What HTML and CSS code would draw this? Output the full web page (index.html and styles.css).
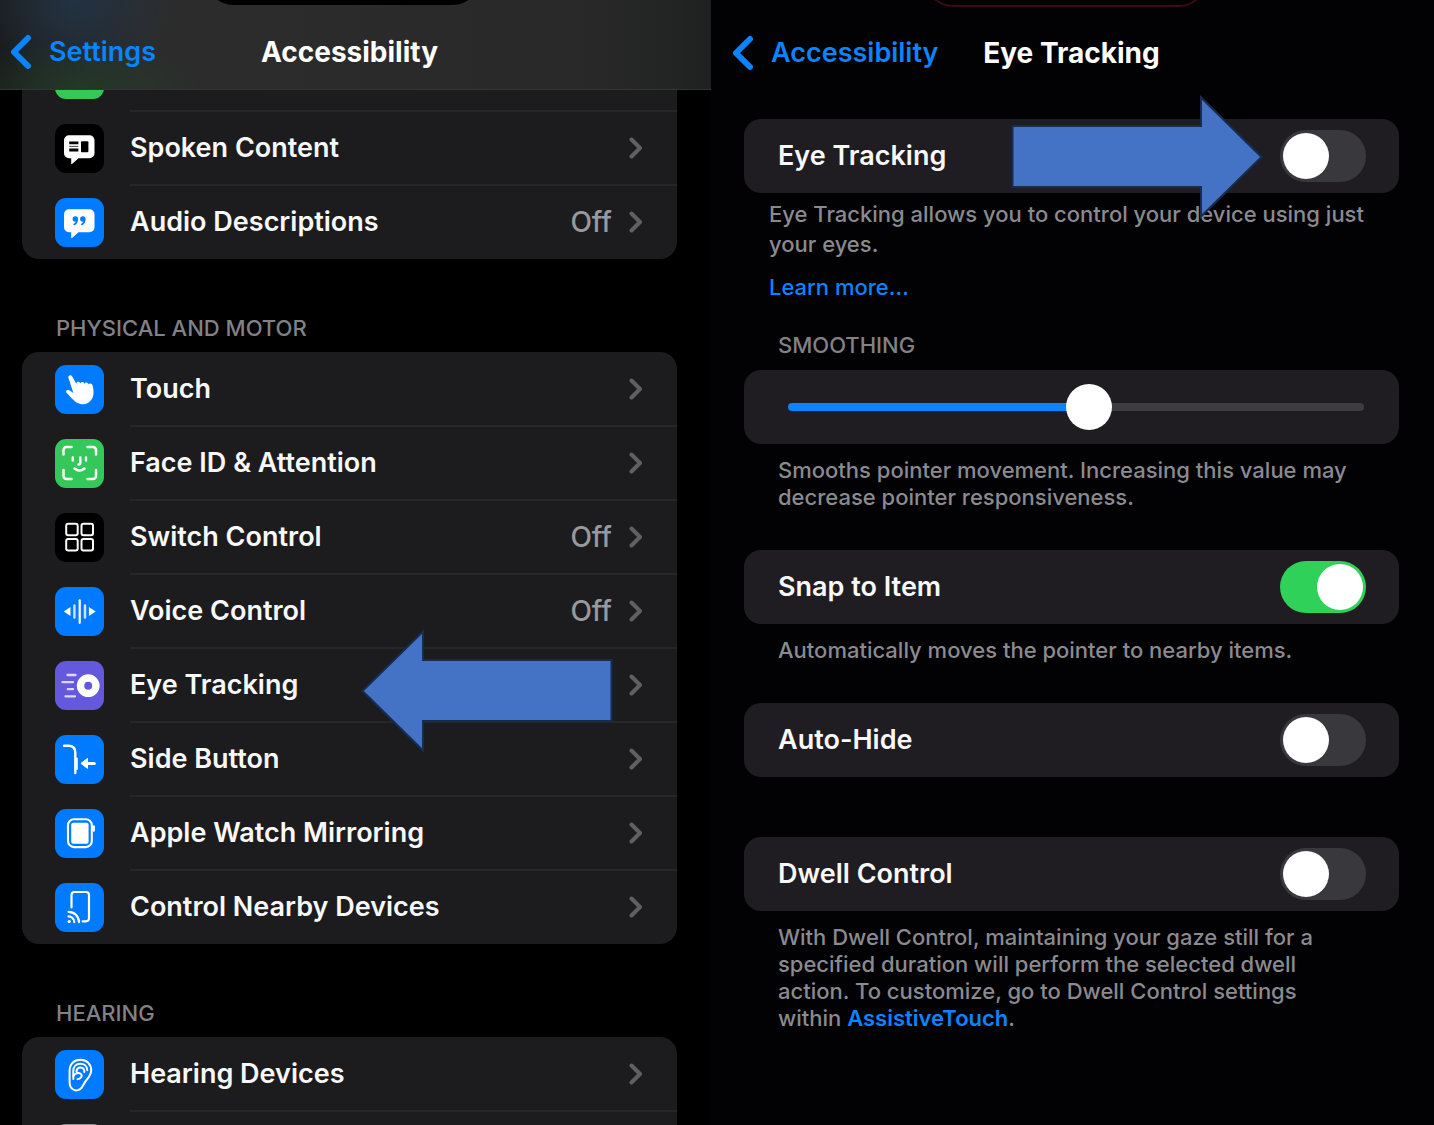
FILE: index.html
```html
<!DOCTYPE html>
<html lang="en">
<head>
  <meta charset="UTF-8" />
  <meta name="viewport" content="width=device-width, initial-scale=1.0"/>
  <title>Eye Tracking Settings</title>
  <link rel="stylesheet" href="styles.css">
</head>
<body>

  <svg class="hidden">
    <symbol id="chevron" viewBox="0 0 14 22">
      <path d="M2.500 2.500 L11 11 L2.500 19.500" fill="none" stroke="currentColor" stroke-width="4" stroke-linecap="round" stroke-linejoin="round"/>
    </symbol>
    <symbol id="back" viewBox="0 0 22 36">
      <path d="M18 4 L4 18 L18 32" fill="none" stroke="currentColor" stroke-width="6" stroke-linecap="round" stroke-linejoin="round"/>
    </symbol>
  </svg>

  <!-- Accessibility list -->
  <section class="screen screen-list">
    <div class="island"></div>
    <header class="navbar navbar-blur">
      <a class="back" href="#"><svg class="back-icon"><use href="#back"/></svg>Settings</a>
      <h1>Accessibility</h1>
    </header>

    <div class="card card-scrolled">
      <div class="row"><span class="icon green"></span></div>
      <a class="row" href="#">
        <svg class="icon black" viewBox="0 0 49 49">
          <path fill="#fff" d="M14 11.300h20.500a5 5 0 0 1 5 5v13a5 5 0 0 1-5 5H23.500L17 40q-.8.500-.8-.6v-5.100H14a5 5 0 0 1-5-5v-13a5 5 0 0 1 5-5z"/>
          <path stroke="#000" stroke-width="2.800" d="M14.200 18.800h9.200M14.200 26h9.200"/>
          <rect x="26" y="17.300" width="7.400" height="11" rx="1" fill="#000"/>
          <path stroke="#444" stroke-width="1" d="M14.200 22.400h9"/>
        </svg>
        <span class="label">Spoken Content</span>
        <svg class="chevron"><use href="#chevron"/></svg>
      </a>
      <a class="row" href="#">
        <svg class="icon blue" viewBox="0 0 49 49">
          <path fill="#fff" d="M14 11.300h20.500a5 5 0 0 1 5 5v13a5 5 0 0 1-5 5H23.500L17 40q-.8.500-.8-.6v-5.100H14a5 5 0 0 1-5-5v-13a5 5 0 0 1 5-5z"/>
          <g fill="#007aff"><circle cx="20.300" cy="21" r="2.700"/><circle cx="27.800" cy="21" r="2.700"/></g>
          <path fill="none" stroke="#007aff" stroke-width="1.600" stroke-linecap="round" d="M22.200 21.500q0 3.500-3 5M29.700 21.500q0 3.500-3 5"/>
        </svg>
        <span class="label">Audio Descriptions</span>
        <span class="value">Off</span>
        <svg class="chevron"><use href="#chevron"/></svg>
      </a>
    </div>

    <h2 class="group-title">PHYSICAL AND MOTOR</h2>
    <div class="card">
      <a class="row" href="#">
        <svg class="icon blue" viewBox="0 0 49 49">
          <path fill="#fff" d="M13.400 12.800c-.6-2.600 2.600-3.600 3.800-1.300l4.200 7.300c.1-2.600 3.400-2.600 3.900-.2.500-2.400 3.700-2.200 4.200.2.700-2.100 3.700-1.700 4.100.6 1-1.600 3.200-1.100 3.900.8 1.200 3.600 1.700 9.300-.2 13-2.300 4.500-7.200 7-12 5.800-5.300-1.300-8.900-6.200-13.500-11-1.700-1.900.4-4 2.500-2.700l4.100 2.600z"/>
        </svg>
        <span class="label">Touch</span>
        <svg class="chevron"><use href="#chevron"/></svg>
      </a>
      <a class="row" href="#">
        <svg class="icon green" viewBox="0 0 49 49">
          <g fill="none" stroke="#fff" stroke-width="2.500" stroke-linecap="round">
            <path d="M8.500 15.500v-4.500a3 3 0 0 1 3-3h5M32.500 8h5.500a3 3 0 0 1 3 3v4.500M41 31v6a3 3 0 0 1-3 3h-5.500M16.500 40h-5a3 3 0 0 1-3-3v-6"/>
            <path d="M17.800 18.500v3M31 18.500v3M25.300 18.500v5.500q0 1.500-1.800 1.500M19.500 29.500q5 4 10 0"/>
          </g>
        </svg>
        <span class="label">Face ID &amp; Attention</span>
        <svg class="chevron"><use href="#chevron"/></svg>
      </a>
      <a class="row" href="#">
        <svg class="icon black" viewBox="0 0 49 49">
          <g fill="none" stroke="#fff" stroke-width="2">
            <rect x="11.200" y="10.700" width="11.500" height="11.500" rx="2"/>
            <rect x="26.500" y="10.700" width="11.500" height="11.500" rx="2"/>
            <rect x="11.200" y="26" width="11.500" height="11.500" rx="2"/>
            <rect x="26.500" y="26" width="11.500" height="11.500" rx="2"/>
          </g>
        </svg>
        <span class="label">Switch Control</span>
        <span class="value">Off</span>
        <svg class="chevron"><use href="#chevron"/></svg>
      </a>
      <a class="row" href="#">
        <svg class="icon blue" viewBox="0 0 49 49">
          <path stroke="#fff" stroke-width="2.200" stroke-linecap="round" d="M24.700 13.300v22.500"/>
          <path stroke="#cfe5ff" stroke-width="2.400" stroke-linecap="round" d="M19.400 18.500v12M30 18.500v12"/>
          <path fill="#fff" d="M8.700 24.400l6.800-4.500v9zM40.700 24.400l-6.800-4.500v9z"/>
        </svg>
        <span class="label">Voice Control</span>
        <span class="value">Off</span>
        <svg class="chevron"><use href="#chevron"/></svg>
      </a>
      <a class="row" href="#">
        <svg class="icon purple" viewBox="0 0 49 49">
          <circle cx="33.200" cy="24.700" r="7.700" fill="none" stroke="#fff" stroke-width="7.400"/>
          <path stroke="#dcd8ff" stroke-width="2.300" stroke-linecap="round" d="M12.500 14h8M7.500 21.200h10.500M12.800 28.200h5.200M10.500 35.300h9.500"/>
        </svg>
        <span class="label">Eye Tracking</span>
        <svg class="chevron"><use href="#chevron"/></svg>
        <svg class="arrow arrow-left" viewBox="0 0 252 124">
          <path d="M1.500 62 L62 2.500 V31 H250.500 V92 H62 V121.500 Z"/>
        </svg>
      </a>
      <a class="row" href="#">
        <svg class="icon blue" viewBox="0 0 49 49">
          <g fill="none" stroke="#fff" stroke-linecap="round">
            <path stroke-width="2.400" d="M9 10.800h4.500q6.800 0 6.800 7V38"/>
            <path stroke-width="2" d="M21.800 23.500v10.500"/>
            <path stroke-width="3" d="M30 28.400h9.300"/>
          </g>
          <path fill="#fff" stroke="#fff" stroke-linejoin="round" d="M26 28.400l6.500-5v10z"/>
        </svg>
        <span class="label">Side Button</span>
        <svg class="chevron"><use href="#chevron"/></svg>
      </a>
      <a class="row" href="#">
        <svg class="icon blue" viewBox="0 0 49 49">
          <rect x="13" y="10.300" width="23.800" height="27.800" rx="6" fill="none" stroke="#fff" stroke-width="2.100"/>
          <rect x="16.200" y="13.700" width="17.400" height="21" rx="2" fill="#fff"/>
          <path stroke="#fff" stroke-width="2.600" stroke-linecap="round" d="M38.600 17.500v4"/>
        </svg>
        <span class="label">Apple Watch Mirroring</span>
        <svg class="chevron"><use href="#chevron"/></svg>
      </a>
      <a class="row" href="#">
        <svg class="icon blue" viewBox="0 0 49 49">
          <g fill="none" stroke="#fff" stroke-width="2.200" stroke-linecap="round">
            <path d="M16.500 24.500V12a3 3 0 0 1 3-3H31a3 3 0 0 1 3 3v23.300a3 3 0 0 1-3 3h-3.500"/>
            <path d="M13.500 28.800a10.500 10.500 0 0 1 10.500 10.300M13.500 33.400a5.800 5.800 0 0 1 5.800 5.700"/>
          </g>
          <circle cx="14.200" cy="38.600" r="1.600" fill="#fff"/>
        </svg>
        <span class="label">Control Nearby Devices</span>
        <svg class="chevron"><use href="#chevron"/></svg>
      </a>
    </div>

    <h2 class="group-title">HEARING</h2>
    <div class="card">
      <a class="row" href="#">
        <svg class="icon blue" viewBox="0 0 49 49">
          <g fill="none" stroke="#fff" stroke-width="2" stroke-linecap="round" stroke-linejoin="round">
            <path d="M14.600 21C14.600 14 19 9.800 25.500 9.800c6.300 0 10.700 4.400 10.700 10.400 0 4.500-2.700 7.500-5.400 10.800-2.300 2.800-2.700 5-4.400 7-2.200 2.700-6 3.200-8.600 1.300-2.300-1.600-3.200-4-3.200-7.300z"/>
            <path d="M18.300 29v-8c0-4.400 3-7.200 7-7.200s6.800 2.600 7 6.400"/>
            <path d="M21.500 22c0-3 1.600-4.600 4-4.600s4.200 2 3.800 4.800M18.500 26c1-3 6-4 7.800-1.600 1.600 2.300-1.400 4.600-3.800 4.800"/>
          </g>
        </svg>
        <span class="label">Hearing Devices</span>
        <svg class="chevron"><use href="#chevron"/></svg>
      </a>
      <div class="row"><span class="icon gray"></span></div>
    </div>
  </section>

  <!-- Eye Tracking details -->
  <section class="screen screen-detail">
    <div class="island island-ring"></div>
    <header class="navbar">
      <a class="back" href="#"><svg class="back-icon"><use href="#back"/></svg>Accessibility</a>
      <h1>Eye Tracking</h1>
    </header>

    <div class="card card-first">
      <div class="row">
        <label class="label" for="eyeTracking">Eye Tracking</label>
        <input class="switch" type="checkbox" id="eyeTracking">
      </div>
      <svg class="arrow arrow-right" viewBox="0 0 252 124">
        <path d="M250.500 62 L190 2.500 V31 H1.500 V92 H190 V121.500 Z"/>
      </svg>
    </div>
    <div class="intro">
      <p>Eye Tracking allows you to control your device using just your eyes.</p>
      <a href="#">Learn more...</a>
    </div>

    <h2 class="group-title"><label for="smoothing">SMOOTHING</label></h2>
    <div class="card">
      <div class="row row-slider">
        <input class="slider" type="range" id="smoothing" min="0" max="1000" value="525">
      </div>
    </div>
    <p class="note">Smooths pointer movement. Increasing this value may decrease pointer responsiveness.</p>

    <div class="card">
      <div class="row">
        <label class="label" for="snap">Snap to Item</label>
        <input class="switch" type="checkbox" id="snap" checked>
      </div>
    </div>
    <p class="note">Automatically moves the pointer to nearby items.</p>

    <div class="card card-gap">
      <div class="row">
        <label class="label" for="autoHide">Auto-Hide</label>
        <input class="switch" type="checkbox" id="autoHide">
      </div>
    </div>

    <div class="card">
      <div class="row">
        <label class="label" for="dwell">Dwell Control</label>
        <input class="switch" type="checkbox" id="dwell">
      </div>
    </div>
    <p class="note">With Dwell Control, maintaining your gaze still for a specified duration will perform the selected dwell action. To customize, go to Dwell Control settings within <a href="#">AssistiveTouch</a>.</p>
  </section>

</body>
</html>
```
FILE: styles.css
```css
* { box-sizing: border-box; }

body {
  font-family: Inter, 'Liberation Sans', sans-serif;
  margin: 0;
  display: grid;
  grid-template-columns: 711fr 723fr;
  height: 100vh;
  overflow: hidden;
  background: #000;
  color: #f8f8f8;
}

h1, h2, p { margin: 0; }
a { color: #0a84ff; text-decoration: none; }
.hidden { display: none; }

.screen {
  position: relative;
  overflow: hidden;
}
.screen-list { padding: 0 34px 0 22px; }
.screen-detail { padding: 0 35px 0 33px; background: #020104; }

/* Notch area at the top of the phone */
.island {
  position: absolute;
  z-index: 3;
  top: -50px;
  left: 206px;
  width: 274px;
  height: 55px;
  border-radius: 28px;
  background: #000;
}
.island-ring {
  left: 214px;
  width: 282px;
  height: 57px;
  border: 2px solid #3a0c14;
}

.navbar {
  position: relative;
  z-index: 2;
  display: grid;
  grid-template-columns: 1fr auto 1fr;
  align-items: center;
  height: 90px;
  margin: 0 -12px;
  padding-top: 15px;
}
.navbar-blur {
  margin: 0 -34px 0 -22px;
  padding-left: 10px;
  padding-right: 22px;
  border-bottom: 1px solid #333434;
  background:
    radial-gradient(ellipse 120px 50px at 80px 100%, rgba(35, 62, 40, 0.8), transparent),
    radial-gradient(ellipse 100px 90px at 75px 0, rgba(34, 52, 70, 0.9), transparent),
    linear-gradient(to right, #191b1b, #2c2c2c 140px, #2c2c2c 240px, #282828 600px, #1f2120);
}
.navbar h1 {
  font-size: 28px;
  line-height: 34px;
  font-weight: 700;
  color: #fff;
}
.back {
  display: flex;
  align-items: center;
  gap: 17px;
  font-size: 27px;
  line-height: 34px;
  font-weight: 600;
}
.back-icon { width: 22px; height: 36px; }

.card {
  position: relative;
  border-radius: 17px;
  background: #1c1c1e;
}
.screen-detail .card { background: #1f1d22; }
.card-scrolled { margin-top: -53px; }
.card-first { margin-top: 29px; }
.card-gap { margin-bottom: 60px; }

.row {
  position: relative;
  display: flex;
  align-items: center;
  height: 74px;
  padding: 0 34px 0 33px;
  color: inherit;
}
.screen-detail .row { padding: 0 33px 0 34px; }
.screen-list .row + .row::before {
  content: "";
  position: absolute;
  top: -1px;
  left: 108px;
  right: 0;
  height: 2px;
  background: #272729;
}
.screen-detail .row-slider { padding: 0 35px 0 44px; }

.label {
  flex: 1;
  font-size: 27px;
  line-height: 34px;
  font-weight: 600;
}
.value {
  margin-right: 17px;
  font-size: 28px;
  line-height: 34px;
  font-weight: 500;
  color: #98989d;
}
.chevron { width: 14px; height: 22px; color: #606064; }

.icon {
  width: 49px;
  height: 49px;
  margin-right: 26px;
  border-radius: 11px;
}
.blue { background: #007aff; }
.green { background: #34c759; }
.black { background: #000; }
.purple { background: #6459dc; }
.gray { background: #8e8e93; }

.group-title {
  padding: 56px 34px 11px;
  font-size: 22px;
  line-height: 26px;
  font-weight: 500;
  color: #818186;
}
.screen-detail .group-title { padding-top: 31px; padding-bottom: 12px; }

.intro {
  padding: 6px 0 0 25px;
  font-size: 22px;
  line-height: 30px;
  font-weight: 500;
  color: #8a8a8f;
}
.intro a {
  display: block;
  margin-top: 14px;
  line-height: 28px;
}

.note {
  padding: 13px 44px 39px 34px;
  font-size: 22px;
  line-height: 27px;
  font-weight: 500;
  color: #8a8a8f;
}
.note a { font-weight: 600; }

.switch {
  appearance: none;
  position: relative;
  width: 86px;
  height: 52px;
  margin: 0;
  border-radius: 26px;
  background: #39393d;
}
.switch::before {
  content: "";
  position: absolute;
  top: 3px;
  left: 3px;
  width: 46px;
  height: 46px;
  border-radius: 50%;
  background: #fff;
}
.switch:checked { background: #30d158; }
.switch:checked::before { left: 37px; }

.slider {
  appearance: none;
  width: 100%;
  height: 8px;
  margin: 0;
  border-radius: 4px;
  background: linear-gradient(to right, #0a84ff 52%, #3d3c41 52%);
}
.slider::-webkit-slider-thumb {
  appearance: none;
  width: 46px;
  height: 46px;
  border-radius: 50%;
  background: #fff;
}

/* Callout arrows */
.arrow {
  position: absolute;
  z-index: 2;
  width: 252px;
  height: 124px;
  fill: #4472c4;
  stroke: #172c51;
  stroke-width: 2;
}
.arrow-left { top: -19px; right: 64px; }
.arrow-right { top: -24px; right: 136px; }
```
